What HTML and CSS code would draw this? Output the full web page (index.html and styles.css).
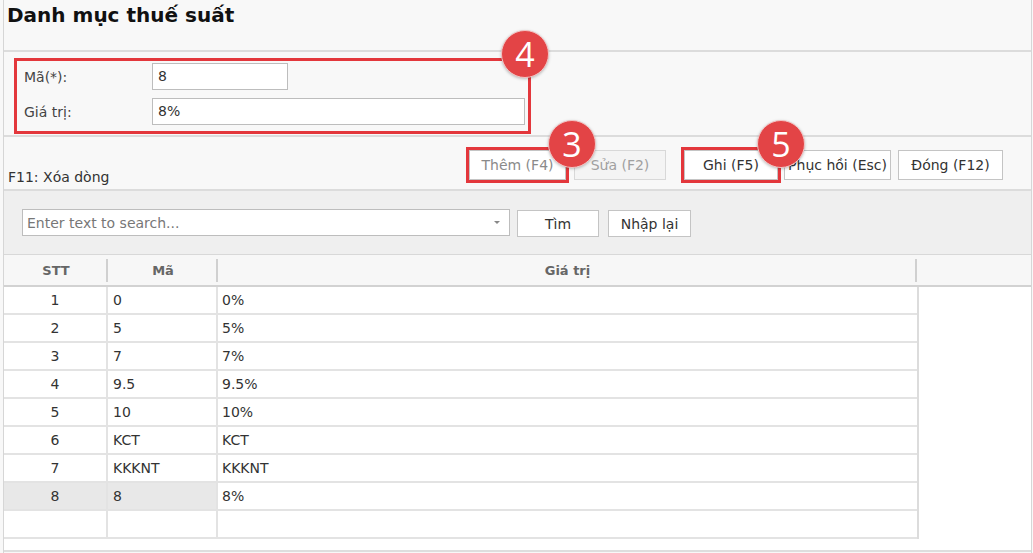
FILE: index.html
```html
<!DOCTYPE html>
<html lang="vi">
<head>
<meta charset="utf-8">
<title>Danh mục thuế suất</title>
<link rel="stylesheet" href="styles.css">
</head>
<body>
<div class="app">
  <div class="title-bar"><h1 class="title">Danh mục thuế suất</h1></div>

  <div class="form-panel">
    <div class="form-box">
      <div class="form-row">
        <label class="form-label">Mã(*):</label>
        <div class="input input-short">8</div>
      </div>
      <div class="form-row">
        <label class="form-label">Giá trị:</label>
        <div class="input input-long">8%</div>
      </div>
      <span class="badge badge-4">4</span>
    </div>
  </div>

  <div class="action-bar">
    <span class="hint">F11: Xóa dòng</span>
    <div class="actions">
      <div class="btn-wrap">
        <button class="btn btn-them is-disabled is-marked">Thêm (F4)</button>
        <span class="badge badge-3">3</span>
      </div>
      <button class="btn btn-sua is-disabled is-muted">Sửa (F2)</button>
      <div class="btn-wrap btn-wrap-ghi">
        <button class="btn btn-ghi is-marked">Ghi (F5)</button>
        <span class="badge badge-5">5</span>
      </div>
      <button class="btn btn-phuc">Phục hồi (Esc)</button>
      <button class="btn btn-dong">Đóng (F12)</button>
    </div>
  </div>

  <div class="search-panel">
    <div class="search-box">
      <span class="search-placeholder">Enter text to search...</span>
      <span class="search-caret"></span>
    </div>
    <button class="btn btn-tim">Tìm</button>
    <button class="btn btn-reset">Nhập lại</button>
  </div>

  <div class="grid">
    <div class="grid-head">
      <div class="hcell hcell-center">STT</div>
      <div class="hcell hcell-center">Mã</div>
      <div class="hcell hcell-center">Giá trị</div>
      <div class="hcell hcell-fill"></div>
    </div>
    <div class="grid-body">
      <div class="row"><div class="cell c-stt">1</div><div class="cell">0</div><div class="cell">0%</div></div>
      <div class="row"><div class="cell c-stt">2</div><div class="cell">5</div><div class="cell">5%</div></div>
      <div class="row"><div class="cell c-stt">3</div><div class="cell">7</div><div class="cell">7%</div></div>
      <div class="row"><div class="cell c-stt">4</div><div class="cell">9.5</div><div class="cell">9.5%</div></div>
      <div class="row"><div class="cell c-stt">5</div><div class="cell">10</div><div class="cell">10%</div></div>
      <div class="row"><div class="cell c-stt">6</div><div class="cell">KCT</div><div class="cell">KCT</div></div>
      <div class="row"><div class="cell c-stt">7</div><div class="cell">KKKNT</div><div class="cell">KKKNT</div></div>
      <div class="row row-selected"><div class="cell c-stt">8</div><div class="cell">8</div><div class="cell">8%</div></div>
      <div class="row row-new"><div class="cell c-stt"></div><div class="cell"></div><div class="cell"></div></div>
    </div>
  </div>
</div>
</body>
</html>
```

FILE: styles.css
```css
* { box-sizing: border-box; }

html, body {
  margin: 0;
  padding: 0;
  background: #f8f8f8;
}

body {
  font-family: "DejaVu Sans", "Noto Sans", sans-serif;
  font-size: 14px;
  color: #333;
  width: 1033px;
  height: 553px;
  overflow: hidden;
}

.app {
  margin-left: 3px;
  margin-right: 1px;
  height: 553px;
  border-left: 1px solid #d6d6d6;
  border-right: 1px solid #d6d6d6;
  display: flex;
  flex-direction: column;
}

.title-bar {
  height: 52px;
  flex: none;
  padding: 3px 0 0 3px;
  border-bottom: 2px solid #dcdcdc;
}

.title {
  margin: 0;
  font-family: "DejaVu Sans", sans-serif;
  font-weight: bold;
  font-size: 20px;
  color: #111;
  line-height: 25px;
}

.form-panel {
  height: 85px;
  flex: none;
  padding: 6px 0 0 10px;
  border-bottom: 2px solid #dcdcdc;
}

.form-box {
  position: relative;
  width: 517px;
  height: 76px;
  border: 3px solid #e3373c;
  padding: 2px 0 0 7px;
  display: flex;
  flex-direction: column;
  gap: 8px;
}

.form-row {
  display: flex;
  align-items: center;
}

.form-label {
  width: 128px;
  color: #444;
}

.input {
  height: 27px;
  background: #fff;
  border: 1px solid #bdbdbd;
  padding: 0 5px;
  line-height: 25px;
  color: #333;
}

.input-short { width: 136px; }
.input-long { width: 373px; }

.badge {
  position: absolute;
  width: 48px;
  height: 48px;
  border-radius: 50%;
  background: #e34446;
  border: 1px solid #f3c4c4;
  box-shadow: 0 1px 3px rgba(0,0,0,0.25);
  color: #fff;
  font-family: "Open Sans", "Liberation Sans", sans-serif;
  font-size: 34px;
  line-height: 46px;
  text-align: center;
  z-index: 2;
}

.badge-4 { right: -21px; top: -31px; }
.badge-3 { right: -30px; top: -30px; }
.badge-5 { right: -27px; top: -30px; }

.action-bar {
  height: 54px;
  flex: none;
  padding: 13px 0 0 4px;
  display: flex;
  justify-content: space-between;
  align-items: flex-start;
  border-bottom: 2px solid #dcdcdc;
}

.hint {
  margin-top: 19px;
  color: #333;
}

.actions {
  display: flex;
  margin-right: 28px;
}

.btn-wrap {
  position: relative;
  display: flex;
}

.btn {
  font-family: "DejaVu Sans", sans-serif;
  font-size: 14px;
  height: 30px;
  background: #fff;
  border: 1px solid #c4c4c4;
  color: #333;
  padding: 0;
  text-align: center;
  white-space: nowrap;
  overflow: visible;
}

.btn.is-disabled { color: #8a8a8a; }
.btn.is-muted { background: #f4f4f4; border-color: #d8d8d8; color: #a0a0a0; }

.btn.is-marked {
  outline: 3px solid #e3373c;
  outline-offset: 0;
}

.btn-them { width: 97px; }
.btn-sua { width: 92px; margin-left: 8px; }
.btn-ghi { width: 94px; }
.btn-wrap-ghi { margin-left: 18px; }
.btn-phuc { width: 107px; margin-left: 6px; }
.btn-dong { width: 105px; margin-left: 7px; }

.search-panel {
  height: 64px;
  flex: none;
  background: #efefef;
  padding: 18px 0 0 18px;
  display: flex;
  align-items: flex-start;
  border-bottom: 1px solid #d8d8d8;
}

.search-box {
  width: 488px;
  height: 27px;
  background: #fff;
  border: 1px solid #bdbdbd;
  display: flex;
  align-items: center;
  justify-content: space-between;
  padding: 0 9px 0 4px;
}

.search-placeholder { color: #777; }

.search-caret {
  width: 0;
  height: 0;
  border-left: 3px solid transparent;
  border-right: 3px solid transparent;
  border-top: 3px solid #888;
}

.btn-tim { width: 82px; height: 27px; margin-left: 7px; margin-top: 1px; }
.btn-reset { width: 83px; height: 27px; margin-left: 9px; margin-top: 1px; }

.grid {
  flex: 1;
  background: #fff;
  border-bottom: 2px solid #dedede;
  margin-bottom: 1px;
}

.grid-head {
  display: grid;
  grid-template-columns: 104px 110px 699px 1fr;
  height: 32px;
  background: #f7f7f7;
  border-bottom: 2px solid #d2d2d2;
}

.hcell {
  font-weight: bold;
  font-size: 13px;
  color: #666;
  display: flex;
  align-items: center;
  justify-content: center;
  position: relative;
}

.hcell-center::after {
  content: "";
  position: absolute;
  right: 0;
  top: 4px;
  bottom: 3px;
  width: 2px;
  background: #d0d0d0;
}

.grid-body {
  width: 915px;
  border-right: 2px solid #dcdcdc;
}

.row {
  display: grid;
  grid-template-columns: 104px 110px 699px;
  height: 28px;
  border-bottom: 2px solid #e3e3e3;
}

.cell {
  display: flex;
  align-items: center;
  padding-left: 5px;
  border-right: 2px solid #e3e3e3;
  color: #333;
}

.cell:last-child { border-right: none; padding-left: 4px; }

.c-stt {
  justify-content: center;
  padding-left: 0;
}

.row-selected .cell:not(:last-child) { background: #e8e8e8; }
```
